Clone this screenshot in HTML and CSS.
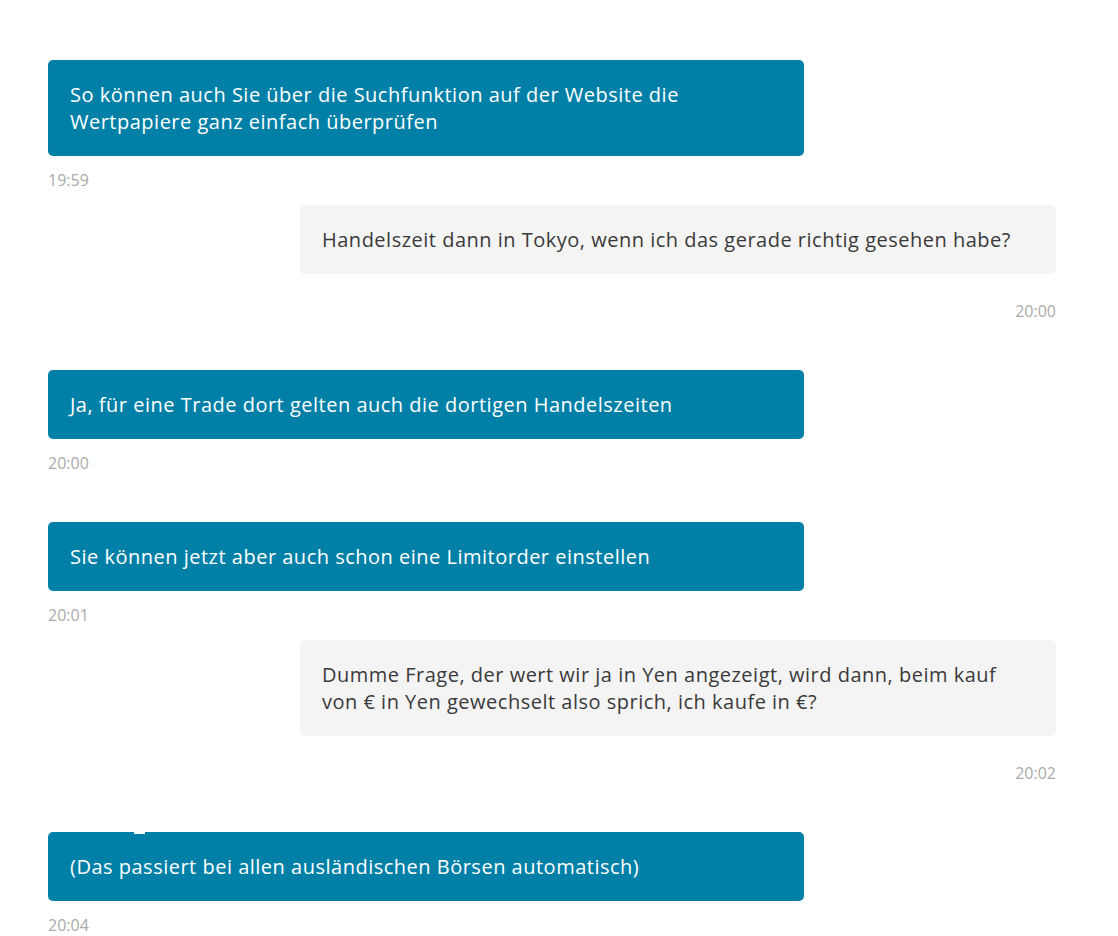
FILE: index.html
```html
<!DOCTYPE html>
<html lang="de">
<head>
<meta charset="utf-8">
<link rel="stylesheet" href="styles.css">
</head>
<body>
<div class="chat">
  <div class="msg agent first">
    <div class="bubble">So können auch Sie über die Suchfunktion auf der Website die<br>Wertpapiere ganz einfach überprüfen</div>
    <div class="time">19:59</div>
  </div>
  <div class="msg user near">
    <div class="bubble">Handelszeit dann in Tokyo, wenn ich das gerade richtig gesehen habe?</div>
    <div class="time">20:00</div>
  </div>
  <div class="msg agent far">
    <div class="bubble">Ja, für eine Trade dort gelten auch die dortigen Handelszeiten</div>
    <div class="time">20:00</div>
  </div>
  <div class="msg agent far">
    <div class="bubble">Sie können jetzt aber auch schon eine Limitorder einstellen</div>
    <div class="time">20:01</div>
  </div>
  <div class="msg user near">
    <div class="bubble">Dumme Frage, der wert wir ja in Yen angezeigt, wird dann, beim kauf<br>von € in Yen gewechselt also sprich, ich kaufe in €?</div>
    <div class="time">20:02</div>
  </div>
  <div class="msg agent far notch">
    <div class="bubble">(Das passiert bei allen ausländischen Börsen automatisch)</div>
    <div class="time">20:04</div>
  </div>
</div>
</body>
</html>
```
FILE: styles.css
```css
html, body {
  margin: 0;
  padding: 0;
  background: #ffffff;
}
body {
  font-family: "Open Sans", Lato, sans-serif;
}
.chat {
  width: 1008px;
  margin-left: 48px;
  display: flex;
  flex-direction: column;
}
.msg {
  display: flex;
  flex-direction: column;
}
.msg.first { margin-top: 60px; }
.msg.near { margin-top: 15px; }
.msg.far { margin-top: 49px; }
.bubble {
  box-sizing: border-box;
  width: 756px;
  padding: 21px 22px 21px;
  border-radius: 5px;
  font-size: 20px;
  line-height: 27px;
  letter-spacing: 0.5px;
}
.agent .bubble {
  background: #0080a7;
  color: #ffffff;
}
.user {
  align-items: flex-end;
}
.user .bubble {
  background: #f4f4f4;
  color: #3a3a3a;
}
.time {
  font-size: 16px;
  line-height: 20px;
  height: 20px;
  color: #ababab;
}
.agent .time { margin-top: 14px; }
.user .time { margin-top: 27px; }
.notch .bubble { position: relative; }
.notch .bubble::before {
  content: "";
  position: absolute;
  left: 86px;
  top: 0;
  width: 11px;
  height: 2px;
  background: #ffffff;
}
```
